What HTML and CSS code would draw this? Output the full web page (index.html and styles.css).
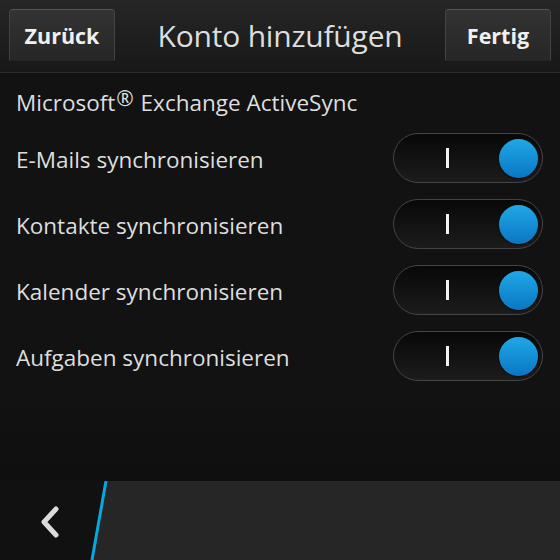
FILE: index.html
```html
<!DOCTYPE html>
<html lang="de">
<head>
  <meta charset="UTF-8">
  <title>Konto hinzufügen</title>
  <link rel="stylesheet" href="styles.css">
</head>
<body>
  <div class="screen">
    <div class="titlebar">
      <button class="tb-btn">Zurück</button>
      <h1 class="tb-title">Konto hinzufügen</h1>
      <button class="tb-btn">Fertig</button>
    </div>

    <div class="content">
      <div class="section-label">Microsoft<sup>®</sup> Exchange ActiveSync</div>

      <div class="row">
        <span class="row-text">E-Mails synchronisieren</span>
        <div class="toggle"><span class="toggle-bar"></span><span class="knob"></span></div>
      </div>
      <div class="row">
        <span class="row-text">Kontakte synchronisieren</span>
        <div class="toggle"><span class="toggle-bar"></span><span class="knob"></span></div>
      </div>
      <div class="row">
        <span class="row-text">Kalender synchronisieren</span>
        <div class="toggle"><span class="toggle-bar"></span><span class="knob"></span></div>
      </div>
      <div class="row">
        <span class="row-text">Aufgaben synchronisieren</span>
        <div class="toggle"><span class="toggle-bar"></span><span class="knob"></span></div>
      </div>
    </div>

    <div class="actionbar">
      <div class="back">
        <svg width="20" height="32" viewBox="0 0 20 32">
          <polyline points="16,3 4,16 16,29" fill="none" stroke="#dcdcdc" stroke-width="5" stroke-linecap="round" stroke-linejoin="round"/>
        </svg>
      </div>
      <svg class="overflow" width="470" height="79" viewBox="0 0 470 79">
        <polygon points="16,0 470,0 470,79 2,79" fill="#262626"/>
        <line x1="16" y1="0" x2="2" y2="79" stroke="#0aa6e0" stroke-width="3"/>
      </svg>
    </div>
  </div>
</body>
</html>
```

FILE: styles.css
```css
*{margin:0;padding:0;box-sizing:border-box;}

body{background:#121212;font-family:"Open Sans","Liberation Sans",sans-serif;color:#dedede;}
.screen{width:560px;height:560px;display:flex;flex-direction:column;overflow:hidden;}

/* title bar */
.titlebar{height:73px;display:flex;align-items:center;justify-content:space-between;padding:0 9px 1px;background:linear-gradient(#262626,#181818);border-bottom:1px solid #2c2c2c;}
.tb-btn{width:106px;height:53px;font-family:inherit;font-size:21.5px;font-weight:700;color:#f0f0f0;background:linear-gradient(#333,#262626);border:1px solid #444;border-top-color:#555;border-bottom-color:#181818;border-radius:4px;}
.tb-title{font-size:30px;font-weight:400;color:#dedede;letter-spacing:-0.2px;}

/* list */
.content{flex:1;padding:0 16px;background:linear-gradient(#121212 78%,#0f0f0f);}
.section-label{height:52px;padding-top:14px;font-size:22.5px;line-height:32px;}
.section-label sup{font-size:21px;vertical-align:5px;line-height:0;margin:0 1px;}
.row{height:66px;display:flex;align-items:center;justify-content:space-between;}
.row-text{font-size:22.5px;padding-top:3px;}

.toggle{width:150px;height:50px;margin-right:1px;border-radius:25px;border:1px solid #444;background:linear-gradient(#080808,#1c1c1c);display:flex;align-items:center;justify-content:space-between;padding:0 4px 0 52px;}
.toggle-bar{width:3px;height:20px;background:#f2f2f2;}
.knob{width:39px;height:39px;border-radius:50%;background:linear-gradient(#1fa8e6,#0a76c4);box-shadow:0 1px 2px rgba(0,0,0,.6);}

/* bottom action bar */
.actionbar{height:79px;display:flex;background:#111;}
.back{width:90px;display:flex;align-items:center;padding-left:40px;padding-top:2px;}
.overflow{display:block;}
```
